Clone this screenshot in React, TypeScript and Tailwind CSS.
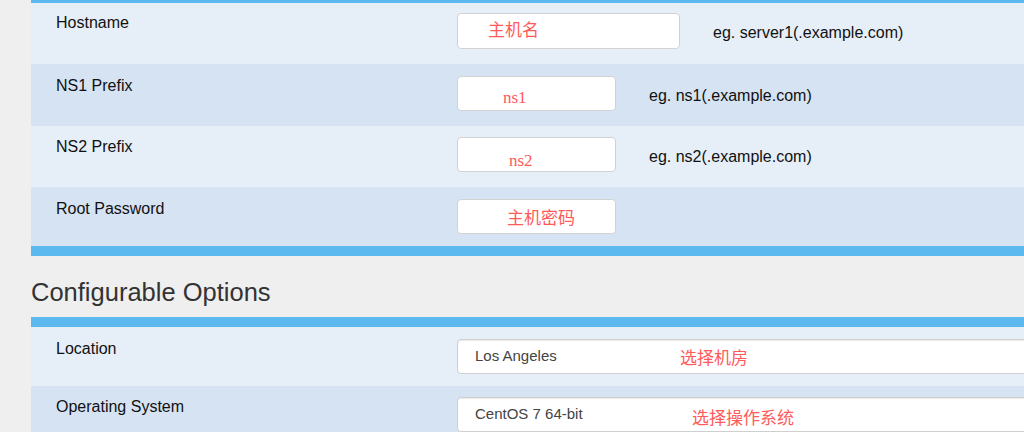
import React from 'react';

const sans = { fontFamily: '"Liberation Sans", Arial, "Noto Sans CJK SC", sans-serif' };
const cjk = '[font-family:"Noto_Sans_CJK_SC",sans-serif]';

function Row({
    label,
    dark,
    height,
    pad,
    children,
}: {
    label: string;
    dark?: boolean;
    height: string;
    pad: string;
    children: React.ReactNode;
}) {
    return (
        <div className={`flex pl-[25px] ${height} ${pad} ${dark ? 'bg-[#d6e3f3]' : 'bg-[#e6eef8]'}`}>
            <div className="w-[401px] shrink-0 text-[16px] leading-5 text-[#111]">{label}</div>
            <div className="flex items-start">{children}</div>
        </div>
    );
}

function Hint({ text }: { text: string }) {
    return <span className="ml-[33px] mt-[10px] text-[16px] leading-5 text-[#111] whitespace-nowrap">{text}</span>;
}

export default function App() {
    return (
        <div className="h-[432px] w-[1024px] overflow-hidden bg-[#efefef]" style={sans}>
            <div className="ml-[31px]">
                {/* product config panel */}
                <div className="h-[3px] bg-[#5bb9f0]" />
                <Row label="Hostname" height="h-[61px]" pad="pt-[10px]">
                    <div className="h-[36px] w-[223px] rounded border border-[#d2d2d2] bg-white pl-[30px] pt-[5px]">
                        <span className={`text-[17px] leading-5 text-[#ff5a5a] ${cjk}`}>主机名</span>
                    </div>
                    <Hint text="eg. server1(.example.com)" />
                </Row>
                <Row label="NS1 Prefix" dark height="h-[62px]" pad="pt-[12px]">
                    <div className="h-[35px] w-[159px] rounded border border-[#d2d2d2] bg-white pl-[45px] pt-[9px]">
                        <span className="text-[17px] leading-5 text-[#ff5a5a] [font-family:'Liberation_Serif',serif]">ns1</span>
                    </div>
                    <Hint text="eg. ns1(.example.com)" />
                </Row>
                <Row label="NS2 Prefix" height="h-[61px]" pad="pt-[11px]">
                    <div className="h-[35px] w-[159px] rounded border border-[#d2d2d2] bg-white pl-[51px] pt-[11px]">
                        <span className="text-[17px] leading-5 text-[#ff5a5a] [font-family:'Liberation_Serif',serif]">ns2</span>
                    </div>
                    <Hint text="eg. ns2(.example.com)" />
                </Row>
                <Row label="Root Password" dark height="h-[59px]" pad="pt-[12px]">
                    <div className="h-[35px] w-[159px] rounded border border-[#d2d2d2] bg-white pl-[49px] pt-[7px]">
                        <span className={`text-[17px] leading-5 text-[#ff5a5a] ${cjk}`}>主机密码</span>
                    </div>
                </Row>
                <div className="h-[10px] bg-[#5bb9f0]" />

                <h2 className="mt-[21px] mb-[10px] text-[25.5px] leading-[30px] font-normal text-[#333]">Configurable Options</h2>

                {/* configurable options panel */}
                <div className="h-[10px] bg-[#5bb9f0]" />
                <Row label="Location" height="h-[59px]" pad="pt-[12px]">
                    <div className="relative flex h-[35px] w-[620px] items-center rounded border border-[#cfcfcf] bg-white pl-[17px] shadow-[inset_0_1px_1px_rgba(0,0,0,0.08)]">
                        <span className="text-[15px] text-[#444]">Los Angeles</span>
                        <span className={`absolute left-[222px] top-[7px] text-[17px] leading-5 text-[#ff5a5a] ${cjk}`}>选择机房</span>
                    </div>
                </Row>
                <Row label="Operating System" dark height="h-[59px]" pad="pt-[11px]">
                    <div className="relative flex h-[35px] w-[620px] items-center rounded border border-[#cfcfcf] bg-white pl-[17px] shadow-[inset_0_1px_1px_rgba(0,0,0,0.08)]">
                        <span className="text-[15px] text-[#444]">CentOS 7 64-bit</span>
                        <span className={`absolute left-[234px] top-[9px] text-[17px] leading-5 text-[#ff5a5a] ${cjk}`}>选择操作系统</span>
                    </div>
                </Row>
            </div>
        </div>
    );
}
